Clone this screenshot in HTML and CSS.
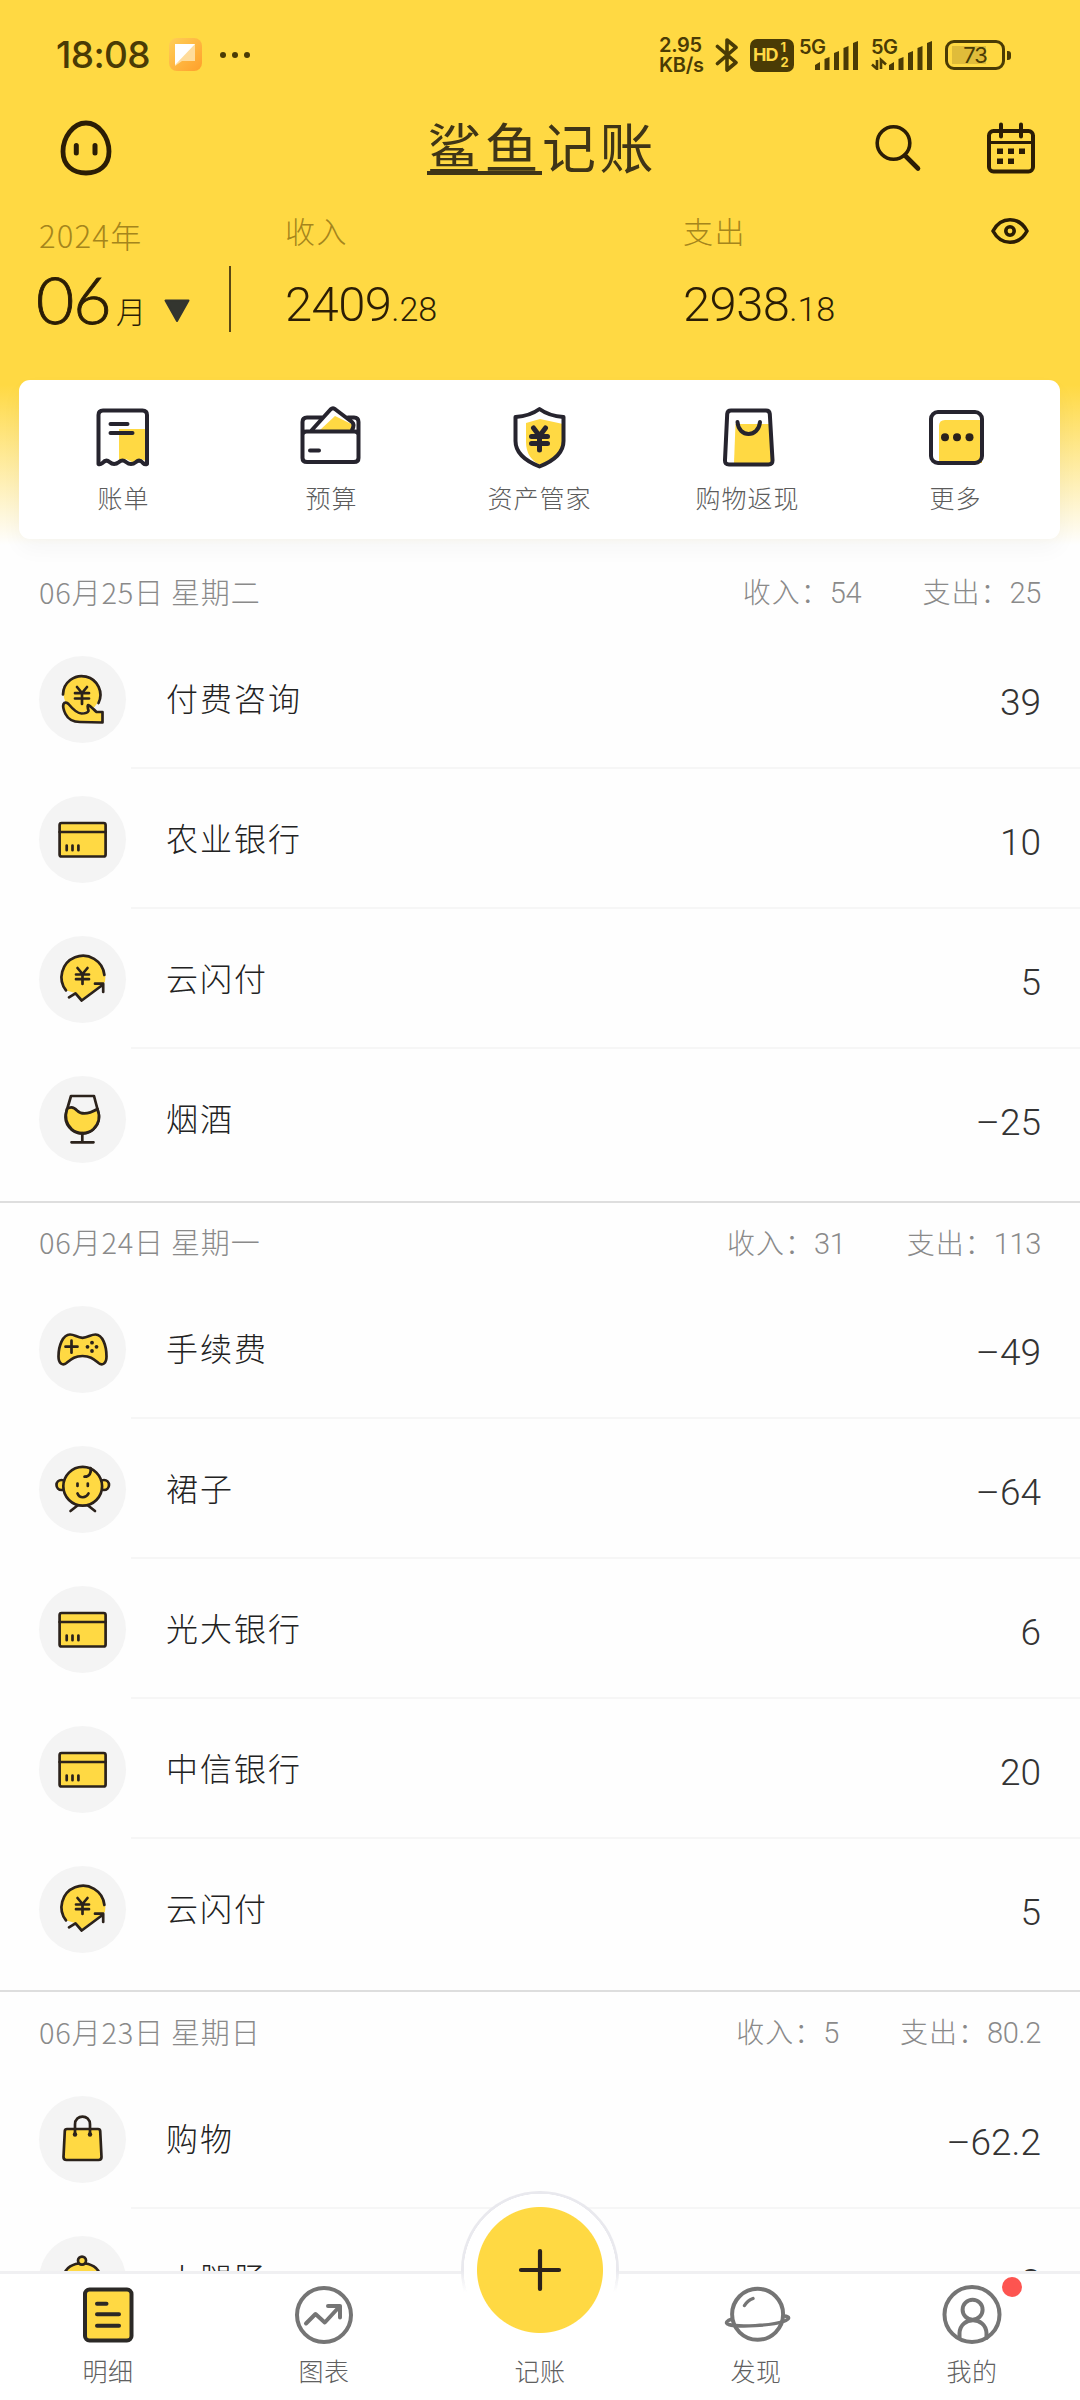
FILE: index.html
```html
<!DOCTYPE html>
<html lang="zh-CN">
<head>
<meta charset="utf-8">
<title>鲨鱼记账</title>
<link rel="stylesheet" href="styles.css">
</head>
<body>
<svg class="defs" width="0" height="0" aria-hidden="true">
  <symbol id="i-coin-hand" viewBox="0 0 87 87">
    <circle cx="42.7" cy="38.2" r="18" fill="#ffd943" stroke="none"/>
    <path d="M24 38.5A18.7 18.7 0 1 1 59.5 47" fill="none"/>
    <path d="M24.5 48c1-2 3.500-1.500 5 0 5 6 9 9.500 13 9.500 3 0 6-.5 7-2.500 0-2.500-2-4-.5-6 3 1 5.500 4.500 8.500 7h6v10.500L41 66c-8 0-12-3-14.500-8-1.500-3-3-7-2-10z"/>
    <path d="M38 31l5 6 5-6M43 37v11M36 37.200h14M36 42.500h14" fill="none"/>
  </symbol>
  <symbol id="i-card" viewBox="0 0 87 87">
    <rect x="20.600" y="27" width="46" height="33.500" rx="2"/>
    <path d="M20.600 36h46M27.700 49.600v4.600M33.500 49.600v4.600M39.400 49.600v4.600"/>
  </symbol>
  <symbol id="i-coin-arrow" viewBox="0 0 87 87">
    <path d="M66 46A22 22 0 1 0 26 54L36 57l7 6z" stroke="none"/>
    <path d="M65.400 39A21.500 21.500 0 1 0 27 54.400" fill="none"/>
    <path d="M30 61.300l6.500-4 6.200 7.200L63.500 49M56 47.700h8.200V56" fill="none"/>
    <path d="M38.500 32l5 6 5-6M43.500 38v10M37 38.500h13M37 43.200h13" fill="none"/>
  </symbol>
  <symbol id="i-glass" viewBox="0 0 87 87">
    <path d="M32 20h23l4.500 17a16.700 16.700 0 1 1-32.500 0z" fill="none"/>
    <path d="M28 33c4-3 7-2 10 1.500 4 4 11 4 20.500-1.500 3 8 1 15-4 20-6 5.500-16 5.500-22 0-5-5-7-12-4.500-20z"/>
    <path d="M43.300 57v9M32.500 66.300h22"/>
  </symbol>
  <symbol id="i-pad" viewBox="0 0 87 87">
    <path d="M31 28.500c5 0 7 3.300 12.500 3.300s8-3.300 13-3.300c7 0 11 11 11 22 0 7-4 9.500-8 6.500-5-4-8-7-16-7s-11 3-16 7c-4 3-8 .5-8-6.500 0-11 4.500-22 11.500-22z"/>
    <path d="M26.500 40.700h12M32.500 34.700v12" />
    <g fill="#2b221b" stroke="none"><circle cx="53" cy="36.700" r="1.900"/><circle cx="48.500" cy="40.800" r="1.900"/><circle cx="57.500" cy="40.800" r="1.900"/><circle cx="53" cy="45" r="1.900"/></g>
  </symbol>
  <symbol id="i-baby" viewBox="0 0 87 87">
    <path d="M38.500 59.500l-7 5.500M49 59.500l7 5.500"/>
    <circle cx="22.500" cy="39" r="5"/><circle cx="65" cy="39" r="5"/>
    <circle cx="43.700" cy="40.300" r="19.400"/>
    <path d="M51.500 22c1 5-1 8.500-6 8.700M38.500 37.500v2.500M48.800 37.500v2.500M38.500 47.500c2 5 8.500 5 11 0" fill="none"/>
  </symbol>
  <symbol id="i-bag" viewBox="0 0 87 87">
    <path d="M28 33h31q2 0 2.200 2l1.300 26q0 3-3 3h-32q-3 0-3-3l1.300-26q.2-2 2.200-2z"/>
    <path d="M36 38.500v-10c0-10.500 15-10.500 15 0v10" fill="none"/>
    <g fill="#2b221b" stroke="none"><circle cx="36" cy="38.500" r="2.200"/><circle cx="51" cy="38.500" r="2.200"/></g>
  </symbol>
  <symbol id="i-cloche" viewBox="0 0 87 87">
    <path d="M25 40c2-17 34-17 36 0v14H25z"/>
    <circle cx="43" cy="24.600" r="4"/>
  </symbol>
</svg>

<main class="app">
  <header class="top">
    <div class="status">
      <span class="clock">18:08</span>
      <svg class="st-app" width="36" height="36" viewBox="0 0 36 36"><defs><linearGradient id="og" x1="0" y1="0" x2="1" y2="1"><stop offset="0" stop-color="#ffcf58"/><stop offset="1" stop-color="#ff9f2a"/></linearGradient></defs><rect x="1" y="1" width="33" height="33" rx="8" fill="url(#og)"/><path d="M7 7h20v17H14l-7 5z" fill="#ffdc9b"/><path d="M7 7h20L7 28z" fill="#fff"/></svg>
      <svg class="st-dots" width="30" height="8" viewBox="0 0 30 8"><circle cx="3" cy="4" r="3"/><circle cx="15" cy="4" r="3"/><circle cx="27" cy="4" r="3"/></svg>
      <span class="speed"><b>2.95</b><b>KB/s</b></span>
      <svg class="bt" width="24" height="38" viewBox="0 0 24 38"><path d="M2.500 10.500L21 26.500 12 34V4l9 7.500L2.500 27.500" fill="none" stroke="#4a3b05" stroke-width="3.600" stroke-linejoin="round" stroke-linecap="round"/></svg>
      <span class="hd"><b>HD</b><span class="hd-n"><i>1</i><i>2</i></span></span>
      <span class="net"><b>5G</b><svg width="45" height="29" viewBox="0 0 45 29"><path d="M1 29v-5l5-3v8zM10.500 29V18l5-2v13zM20 29V12l5-2v19zM29.500 29V7l5-2v24zM39 29V2l5-2v29z"/></svg></span>
      <span class="net net2"><b>5G</b><svg width="62" height="29" viewBox="0 0 62 29"><path d="M18 29v-5l5-3v8zM27.500 29V18l5-2v13zM37 29V12l5-2v19zM46.500 29V7l5-2v24zM56 29V2l5-2v29z"/><path d="M6 19v9l-5-4.500M10 28v-9l5 4.500" fill="none" stroke="#4a3b05" stroke-width="2.600"/></svg></span>
      <span class="battery"><span class="cell">73</span><i></i></span>
    </div>

    <div class="titlebar">
      <svg class="egg" width="54" height="56" viewBox="0 0 54 56"><path d="M27 3C14 3 4 17.500 4 31.500S14 53 27 53s23-7.500 23-21.500S40 3 27 3z" fill="none" stroke="#2b1d05" stroke-width="4.800"/><path d="M17.300 25.500v7.500M36 25.500v7.500" stroke="#2b1d05" stroke-width="5" stroke-linecap="round"/></svg>
      <h1><span>鲨鱼</span>记账</h1>
      <div class="tools">
        <svg width="48" height="50" viewBox="0 0 48 50" fill="none" stroke="#2b1d05"><circle cx="19.500" cy="20" r="16.300" stroke-width="3.600"/><path d="M31 32.500l13 13" stroke-width="4.600" stroke-linecap="round"/></svg>
        <svg width="50" height="52" viewBox="0 0 50 52" fill="none" stroke="#2b1d05" stroke-width="4"><rect x="3" y="9" width="44" height="40.500" rx="4.500"/><path d="M3 20.500h44" stroke-width="3"/><path d="M15 2.500v12M35 2.500v12" stroke-linecap="round"/><path d="M11 29.300h6M22 29.300h6M33 29.300h6M11 39.300h6M22 39.300h6" stroke-width="5.500"/></svg>
      </div>
    </div>

    <div class="summary">
      <div class="month"><div class="cap">2024年</div><div class="mrow"><b>06</b><span>月</span><svg width="28" height="24" viewBox="0 0 28 24"><path d="M2.500 1.500h23L14 22z" fill="#33352f" stroke="#33352f" stroke-width="2" stroke-linejoin="round"/></svg></div></div>
      <div class="sum"><div class="cap">收入</div><div class="amt">2409<small>.28</small></div></div>
      <div class="sum"><div class="cap">支出</div><div class="amt">2938<small>.18</small></div></div>
      <svg class="eye" width="40" height="28" viewBox="0 0 40 28" fill="none" stroke="#2b1d05" stroke-width="3.600"><path d="M3 14C11-1 29-1 37 14 29 29 11 29 3 14z" stroke-linejoin="round"/><circle cx="20" cy="14" r="4.200"/></svg>
    </div>
  </header>

  <nav class="quick">
    <a><svg viewBox="0 0 60 60"><path d="M26 21h27v32l-5-2-7 4-8-4-7 3z" fill="#ffd943"/><g class="ln"><path d="M5.500 56V7q0-4.500 4.500-4.500h39.500q4.500 0 4.500 4.500v49q-2 1-4-1-3.500-4-7-1-5 4-10 0-3.500-3-7 0-5 4-9.500 0-3.500-3-7 1-2.500 2-4 1z"/><path d="M17.500 16h17M17.500 25h22"/></g></svg>账单</a>
    <a><svg viewBox="0 0 60 60"><path d="M34 8L19 22h31l2.500-5z" fill="#ffd943"/><g class="ln"><path d="M21 9.500H6q-4.500 0-4.500 4.500v36q0 4 4.500 4h47q4.500 0 4.500-4V14q0-4.500-4.500-4.500H47M1.500 27q0-3.500 4-3.500h48q4 0 4 3.500M10 23L29.500 1.500q2.500-2.500 5 0L51 14q3 2.500 0 8M9 42.500h9"/></g></svg>预算</a>
    <a><svg viewBox="0 0 60 60"><path d="M17 15l14-4 23 5v18q0 12-23 23Q17 50 17 34z" fill="#ffd943"/><g class="ln"><path d="M30.500 1Q21 8 6.500 9v24q0 16 24 25.500Q54.500 49 54.500 33V9Q40 8 30.500 1z"/><path d="M24.500 20l6 8 6-8M30.500 28v14M22.500 28.500h16M22.500 35.500h16" stroke-width="5"/></g></svg>资产管家</a>
    <a><svg viewBox="0 0 60 60"><path d="M18.500 16h34l2 36q0 3-3 3H17z" fill="#ffd943"/><g class="ln"><path d="M14 2.500h35q3.500 0 3.800 3.500l2.700 46q.2 4.500-4 4.500H12q-4.300 0-4-4.500L10.200 6q.3-3.500 3.800-3.500z"/><path d="M20.500 14c1 16 21 16 22.500 0"/></g></svg>购物返现</a>
    <a><svg viewBox="0 0 60 60"><path d="M20 12h37v43H14V18q0-6 6-6z" fill="#ffd943"/><g class="ln"><rect x="6" y="4" width="51" height="51" rx="7"/></g><g fill="#2b221b"><circle cx="20" cy="29.300" r="4"/><circle cx="32" cy="29.300" r="4"/><circle cx="44.500" cy="29.300" r="4"/></g></svg>更多</a>
  </nav>

  <section class="day">
    <header><h2>06月25日 星期二</h2><p>收入：<b>54</b></p><p>支出：<b>25</b></p></header>
    <ul>
      <li><svg class="ic"><use href="#i-coin-hand"/></svg><div><span>付费咨询</span><b>39</b></div></li>
      <li><svg class="ic"><use href="#i-card"/></svg><div><span>农业银行</span><b>10</b></div></li>
      <li><svg class="ic"><use href="#i-coin-arrow"/></svg><div><span>云闪付</span><b>5</b></div></li>
      <li><svg class="ic"><use href="#i-glass"/></svg><div><span>烟酒</span><b>–25</b></div></li>
    </ul>
  </section>
  <section class="day">
    <header><h2>06月24日 星期一</h2><p>收入：<b>31</b></p><p>支出：<b>113</b></p></header>
    <ul>
      <li><svg class="ic"><use href="#i-pad"/></svg><div><span>手续费</span><b>–49</b></div></li>
      <li><svg class="ic"><use href="#i-baby"/></svg><div><span>裙子</span><b>–64</b></div></li>
      <li><svg class="ic"><use href="#i-card"/></svg><div><span>光大银行</span><b>6</b></div></li>
      <li><svg class="ic"><use href="#i-card"/></svg><div><span>中信银行</span><b>20</b></div></li>
      <li><svg class="ic"><use href="#i-coin-arrow"/></svg><div><span>云闪付</span><b>5</b></div></li>
    </ul>
  </section>
  <section class="day">
    <header><h2>06月23日 星期日</h2><p>收入：<b>5</b></p><p>支出：<b>80.2</b></p></header>
    <ul>
      <li><svg class="ic"><use href="#i-bag"/></svg><div><span>购物</span><b>–62.2</b></div></li>
      <li><svg class="ic"><use href="#i-cloche"/></svg><div><span>火腿肠</span><b>8</b></div></li>
    </ul>
  </section>

  <nav class="tabs">
    <a><svg viewBox="0 0 70 62"><g fill="#ffd943" stroke="#2b2926" stroke-width="4"><rect x="12" y="5.500" width="46.500" height="51" rx="4.500"/><path d="M24 19.700h9.500M24 30.300h22M24 41.700h22" stroke-linecap="round"/></g></svg>明细</a>
    <a><svg viewBox="0 0 70 62"><g class="gr"><circle cx="35" cy="31" r="27"/><path d="M17 39.500l9.500-9.500 9.300 8.500L51 22M39 22h12v11.500"/></g></svg>图表</a>
    <a class="add"><span class="fab"><svg viewBox="0 0 44 44"><path d="M22 3v38M3 22h38" stroke="#2b221b" stroke-width="4.200" stroke-linecap="round"/></svg></span>记账</a>
    <a><svg viewBox="0 0 70 62"><g class="gr"><circle cx="36.600" cy="30.300" r="25.500"/><path d="M11 35c-5 1.500-7.500 4-3.500 5.500 10 3 43 1 55-3 6-2.500 7.500-5 .5-5.500M23.500 21.500q3-5 8.500-7" stroke-width="3.400"/></g></svg>发现</a>
    <a class="me"><svg viewBox="0 0 70 62"><g class="gr"><circle cx="35" cy="30.500" r="27.500"/><circle cx="35.600" cy="25.700" r="10"/><path d="M22.500 54v-5c1-17 26-17 27 0v5"/></g></svg>我的<i></i></a>
  </nav>
</main>
</body>
</html>
```
FILE: styles.css
```css
* { box-sizing: border-box; margin: 0; padding: 0; }
body { width: 1080px; height: 2400px; overflow: hidden; background: #fefefe; font-family: "Noto Sans CJK SC", sans-serif; font-weight: 300; color: #333; }
b, i, h1, h2 { font-weight: inherit; font-style: normal; }
.defs { position: absolute; }
.app { position: relative; height: 2400px; overflow: hidden; background: linear-gradient(#ffd943 0, #ffd943 385px, #fefefe 545px); }

/* Status bar */
.top { height: 380px; }
.status { display: flex; align-items: center; height: 110px; padding: 0 69px 0 56px; color: #4a3b05; fill: #4a3b05; }
.clock { width: 112px; font: 500 37px/40px Inter, sans-serif; letter-spacing: -.6px; white-space: nowrap; }
.st-app { margin-right: 16px; }
.st-dots { margin-right: auto; }
.speed { display: flex; flex-direction: column; gap: 1px; width: 56px; font: 600 20px/19px Inter, sans-serif; letter-spacing: -.3px; }
.bt { margin-right: 11px; }
.hd { display: flex; align-items: center; width: 44px; height: 33px; margin-right: 5px; padding-left: 3px; border-radius: 7px; background: #4a3b05; color: #ffd943; font: 700 18px/20px Inter, sans-serif; letter-spacing: -1px; }
.hd-n { display: flex; flex-direction: column; font-size: 13px; line-height: 15px; margin-left: 3px; }
.net { display: grid; width: 60px; height: 30px; margin-right: 12px; }
.net b, .net svg { grid-area: 1 / 1; }
.net b { font: 600 20px/15px Inter, sans-serif; letter-spacing: -.5px; }
.net svg { justify-self: end; align-self: end; }
.net2 { width: 62px; margin-right: 12px; }
.battery { display: flex; align-items: center; gap: 2px; }
.cell { width: 60px; height: 30px; border: 3px solid #4a3b05; border-radius: 9px; background: linear-gradient(90deg, #e0bc3a 0, #e0bc3a 100%) 4px 3px / 34px 18px no-repeat; font: 400 22px/24px Inter, sans-serif; text-align: center; letter-spacing: -1px; }
.battery i { width: 4px; height: 9px; border-radius: 0 3px 3px 0; background: #4a3b05; }

/* Title bar */
.titlebar { display: grid; grid-template-columns: 1fr auto 1fr; align-items: center; height: 76px; padding: 0 44px 0 59px; }
h1 { display: flex; font-size: 54px; line-height: 50px; letter-spacing: 3.500px; color: #3f3517; font-weight: 400; margin-left: -11px; }
h1 span { height: 54px; border-bottom: 4px solid #3f3517; }
.tools { display: flex; justify-content: flex-end; align-items: center; gap: 64px; }

/* Month summary */
.summary { display: grid; grid-template-columns: 192px 396px 1fr auto; padding: 24px 50px 0 39px; color: #2b1d05; }
.cap { margin-top: -2px; margin-bottom: 2px; font-size: 30px; line-height: 44px; letter-spacing: 1.500px; color: #a5851c; }
.month { padding-top: 4px; }
.month .cap { margin-top: -1px; margin-bottom: 1px; font-size: 31px; letter-spacing: 1.200px; }
.mrow { display: flex; align-items: center; height: 66px; margin-top: 9px; border-right: 2px solid #5a4814; }
.mrow b { width: 76px; margin-left: -3px; font: 300 66px/66px Lato, sans-serif; letter-spacing: -1px; -webkit-text-stroke: .9px #2b1d05; }
.mrow span { font-size: 30px; line-height: 30px; margin: 21px 17px 0 4px; }
.mrow svg { margin-top: 24px; }
.sum { padding-left: 54px; }
.sum + .sum { padding-left: 56px; }
.amt { margin-top: 23px; font: 300 49px/60px Roboto, sans-serif; letter-spacing: -.6px; }
.amt small { font-size: 34px; letter-spacing: 0; }
.eye { margin-top: 7px; }

/* Shortcut card */
.quick { display: grid; grid-template-columns: repeat(5, 208px); justify-content: center; height: 159px; margin: 0 20px 13px 19px; padding-top: 28px; border-radius: 11px; background: #fff; box-shadow: 0 10px 22px rgba(0, 0, 0, .035); }
.quick a { display: flex; flex-direction: column; align-items: center; gap: 11px; font-size: 25px; line-height: 36px; letter-spacing: 1px; color: #5c5c5c; }
.quick svg { width: 60px; height: 60px; margin-right: 2px; overflow: visible; }
.ln { fill: none; stroke: #26242e; stroke-width: 4; stroke-linecap: round; stroke-linejoin: round; }

/* Daily groups */
.day { background: #fefefe; }
.day:first-of-type { background: none; }
.day + .day { margin-top: 12px; border-top: 2px solid #dedede; }
.day + .day + .day { margin-top: 11px; }
.day header { display: flex; align-items: center; height: 77px; padding: 0 39px; color: #8a8a8a; }
.day + .day header { height: 76px; }
.day + .day + .day header { height: 77px; }
h2 { margin-right: auto; font-size: 29px; line-height: 40px; letter-spacing: .8px; }
.day p { display: flex; align-items: baseline; margin: 3px 0 0 61px; font-size: 28px; line-height: 40px; letter-spacing: 1px; }
.day p b { font: 300 29px/40px Roboto, sans-serif; letter-spacing: -.3px; }
.day ul { list-style: none; }
.day li { display: flex; align-items: center; height: 140px; padding-left: 39px; }
.ic { flex: none; width: 87px; height: 87px; margin-right: 5px; border-radius: 50%; background: #f4f4f4; fill: #ffd943; stroke: #2b221b; stroke-width: 2.700; stroke-linecap: round; stroke-linejoin: round; }
.day li div { display: flex; align-items: center; justify-content: space-between; flex: 1; height: 140px; padding: 0 39px 0 35px; border-bottom: 2px solid #f6f6f6; }
.day li:last-child div { border-bottom-color: transparent; }
.day li span { padding-bottom: 2px; font-size: 32px; line-height: 46px; letter-spacing: 2px; color: #222; }
.day li b { padding-top: 9px; font: 300 37px/46px Roboto, sans-serif; letter-spacing: 0; }

/* Bottom tabs */
.tabs { position: absolute; left: 0; right: 0; bottom: 0; display: grid; grid-template-columns: repeat(5, 216px); height: 129px; border-top: 3px solid #f0f0f2; background: #fff; }
.tabs a { position: relative; display: flex; flex-direction: column; align-items: center; padding-top: 10px; gap: 6px; font-size: 25px; line-height: 36px; letter-spacing: .6px; color: #606060; }
.tabs a > svg { width: 70px; height: 62px; }
.gr { fill: none; stroke: #757575; stroke-width: 4; stroke-linecap: round; stroke-linejoin: round; }
.tabs .add { justify-content: flex-end; padding-bottom: 12px; }
.fab { position: absolute; top: -83px; left: 29px; display: grid; place-items: center; width: 158px; height: 158px; border-radius: 50%; background: radial-gradient(circle, #ffd943 0 62.500px, #fff 63.500px 76px, transparent 76.500px), linear-gradient(#e9e9ee 0 50%, #fff 64%); }
.fab svg { width: 44px; height: 44px; }
.me i { position: absolute; top: 3px; right: 58px; width: 20px; height: 20px; border-radius: 50%; background: #fd5450; }
```
